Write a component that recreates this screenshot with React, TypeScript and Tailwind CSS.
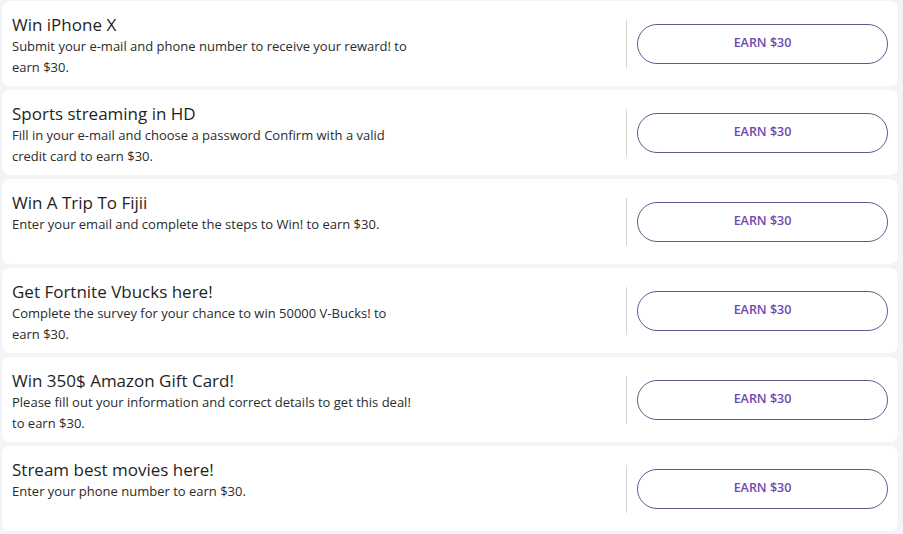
const offers = [
  {
    title: "Win iPhone X",
    text: "Submit your e-mail and phone number to receive your reward! to earn $30.",
  },
  {
    title: "Sports streaming in HD",
    text: "Fill in your e-mail and choose a password Confirm with a valid credit card to earn $30.",
  },
  {
    title: "Win A Trip To Fijii",
    text: "Enter your email and complete the steps to Win! to earn $30.",
  },
  {
    title: "Get Fortnite Vbucks here!",
    text: "Complete the survey for your chance to win 50000 V-Bucks! to earn $30.",
  },
  {
    title: "Win 350$ Amazon Gift Card!",
    text: "Please fill out your information and correct details to get this deal! to earn $30.",
  },
  {
    title: "Stream best movies here!",
    text: "Enter your phone number to earn $30.",
  },
];

function OfferRow({ title, text }: { title: string; text: string }) {
  return (
    <div className="flex h-[85px] items-center rounded-lg bg-white pl-[10px] pr-[10px]">
      <div className="flex-1 self-start pt-[12px]">
        <h3 className="text-[17px] leading-[23px] text-[#1f1f1f]">{title}</h3>
        <p className="w-[402px] text-[13px] leading-[21px] text-[#2b2b2b]">{text}</p>
      </div>
      <div className="h-[48px] w-px bg-[#d6d6d6]" />
      <button className="ml-[10px] h-[40px] w-[251px] rounded-full border border-[#6a5590] text-[12.5px] font-semibold text-[#7048b0]">
        EARN $30
      </button>
    </div>
  );
}

export default function App() {
  return (
    <div
      className="flex min-h-screen flex-col gap-[4px] bg-[#f3f4f8] pt-[1px] pb-[2px] pl-[2px] pr-[5px]"
      style={{ fontFamily: "'Open Sans', 'Noto Sans', sans-serif" }}
    >
      {offers.map((o) => (
        <OfferRow key={o.title} title={o.title} text={o.text} />
      ))}
    </div>
  );
}
